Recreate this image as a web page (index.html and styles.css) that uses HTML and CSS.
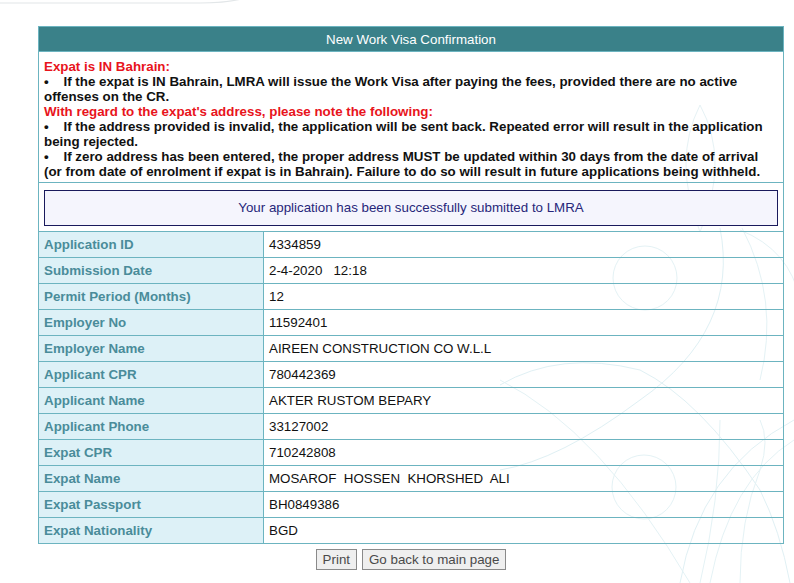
FILE: index.html
```html
<!DOCTYPE html>
<html lang="en">
<head>
<meta charset="utf-8">
<title>New Work Visa Confirmation</title>
<link rel="stylesheet" href="styles.css">
</head>
<body>
<svg class="bg-deco" width="794" height="583" viewBox="0 0 794 583" aria-hidden="true">
  <path d="M0 3 L200 3 Q228 3 245 -2" fill="none" stroke="#e2e6e8" stroke-width="1.2"/>
  <circle cx="645" cy="278" r="32" fill="none" stroke="#e4f2f5" stroke-width="1"/>
  <circle cx="644" cy="487" r="32" fill="none" stroke="#e4f2f5" stroke-width="1"/>
  <path d="M700 105 Q730 160 700 232 Q672 160 700 105 Z" fill="none" stroke="#e6f2f5" stroke-width="1"/>
  <path d="M720 228 Q740 330 640 400 Q560 460 500 470" fill="none" stroke="#dff0f4" stroke-width="1"/>
  <path d="M742 228 Q780 300 760 380" fill="none" stroke="#e4f2f5" stroke-width="1"/>
  <path d="M740 230 Q790 250 800 300" fill="none" stroke="#e4f2f5" stroke-width="1"/>
  <path d="M500 385 Q560 350 640 370 Q700 400 760 490 Q780 530 790 583" fill="none" stroke="#e0f0f4" stroke-width="1"/>
  <path d="M500 380 Q600 430 690 583" fill="none" stroke="#e4f2f5" stroke-width="1"/>
  <path d="M680 583 Q700 470 794 420" fill="none" stroke="#e0f0f4" stroke-width="1"/>
  <path d="M710 583 Q730 480 794 440" fill="none" stroke="#e4f2f5" stroke-width="1"/>
  <path d="M740 583 Q740 520 760 470 Q770 440 760 420" fill="none" stroke="#e4f2f5" stroke-width="1"/>
  <path d="M700 583 Q720 500 720 420" fill="none" stroke="#e4f2f5" stroke-width="1"/>
</svg>
<main class="page">
  <table class="visa">
    <tr>
      <th class="title" colspan="2">New Work Visa Confirmation</th>
    </tr>
    <tr>
      <td class="notice" colspan="2">
        <div class="red">Expat is IN Bahrain:</div>
        <div>•&nbsp;&nbsp;&nbsp; If the expat is IN Bahrain, LMRA will issue the Work Visa after paying the fees, provided there are no active offenses on the CR.</div>
        <div class="red">With regard to the expat's address, please note the following:</div>
        <div>•&nbsp;&nbsp;&nbsp; If the address provided is invalid, the application will be sent back. Repeated error will result in the application being rejected.</div>
        <div>•&nbsp;&nbsp;&nbsp; If zero address has been entered, the proper address MUST be updated within 30 days from the date of arrival (or from date of enrolment if expat is in Bahrain). Failure to do so will result in future applications being withheld.</div>
      </td>
    </tr>
    <tr>
      <td class="msg-cell" colspan="2">
        <div class="msg">Your application has been successfully submitted to LMRA</div>
      </td>
    </tr>
    <tr><td class="lbl">Application ID</td><td class="val">4334859</td></tr>
    <tr><td class="lbl">Submission Date</td><td class="val">2-4-2020&nbsp;&nbsp; 12:18</td></tr>
    <tr><td class="lbl">Permit Period (Months)</td><td class="val">12</td></tr>
    <tr><td class="lbl">Employer No</td><td class="val">11592401</td></tr>
    <tr><td class="lbl">Employer Name</td><td class="val">AIREEN CONSTRUCTION CO W.L.L</td></tr>
    <tr><td class="lbl">Applicant CPR</td><td class="val">780442369</td></tr>
    <tr><td class="lbl">Applicant Name</td><td class="val">AKTER RUSTOM BEPARY</td></tr>
    <tr><td class="lbl">Applicant Phone</td><td class="val">33127002</td></tr>
    <tr><td class="lbl">Expat CPR</td><td class="val">710242808</td></tr>
    <tr><td class="lbl">Expat Name</td><td class="val">MOSAROF&nbsp; HOSSEN&nbsp; KHORSHED&nbsp; ALI</td></tr>
    <tr><td class="lbl">Expat Passport</td><td class="val">BH0849386</td></tr>
    <tr><td class="lbl">Expat Nationality</td><td class="val">BGD</td></tr>
  </table>
  <div class="actions">
    <button class="btn" type="button">Print</button>
    <button class="btn" type="button">Go back to main page</button>
  </div>
</main>
</body>
</html>
```

FILE: styles.css
```css
html, body {
  margin: 0;
  padding: 0;
  background: #ffffff;
}

body {
  font-family: "Liberation Sans", Arial, sans-serif;
  font-size: 13.33px;
  color: #000;
  position: relative;
  width: 794px;
  height: 583px;
  overflow: hidden;
}

.bg-deco {
  position: absolute;
  left: 0;
  top: 0;
  z-index: 0;
}

.page {
  position: relative;
  z-index: 1;
  padding: 26px 0 0 38px;
}

.visa {
  width: 746px;
  border-collapse: collapse;
  border: 1px solid #6cb4c0;
}

.visa td, .visa th {
  border: 1px solid #6cb4c0;
}

.title {
  background: #3a8189;
  color: #ffffff;
  font-weight: normal;
  font-size: 13.33px;
  height: 24px;
  padding: 0;
  text-align: center;
  border-color: #5aa6b2;
}

.notice {
  font-weight: bold;
  line-height: 15px;
  padding: 7px 5px 3px 5px;
  color: #111;
}

.notice .red {
  color: #e8141c;
}

.msg-cell {
  padding: 7px 5px 5px 5px;
}

.msg {
  border: 1px solid #1a1a5c;
  background: #f5f5fd;
  color: #27277a;
  text-align: center;
  height: 34px;
  line-height: 34px;
}

.lbl {
  width: 214px;
  background: #ddf1f7;
  color: #4a8c9a;
  font-weight: bold;
  height: 25px;
  padding: 0 5px;
}

.val {
  height: 25px;
  padding: 0 5px;
  color: #111;
}

.actions {
  width: 746px;
  display: flex;
  justify-content: center;
  gap: 5px;
  margin-top: 5px;
}

.btn {
  font-family: "Liberation Sans", Arial, sans-serif;
  font-size: 13.33px;
  color: #4a4a4a;
  background: #efefef;
  border: 1px solid #8a8a8a;
  border-radius: 0;
  padding: 1px 6px;
  height: 21px;
  line-height: 17px;
}
```
